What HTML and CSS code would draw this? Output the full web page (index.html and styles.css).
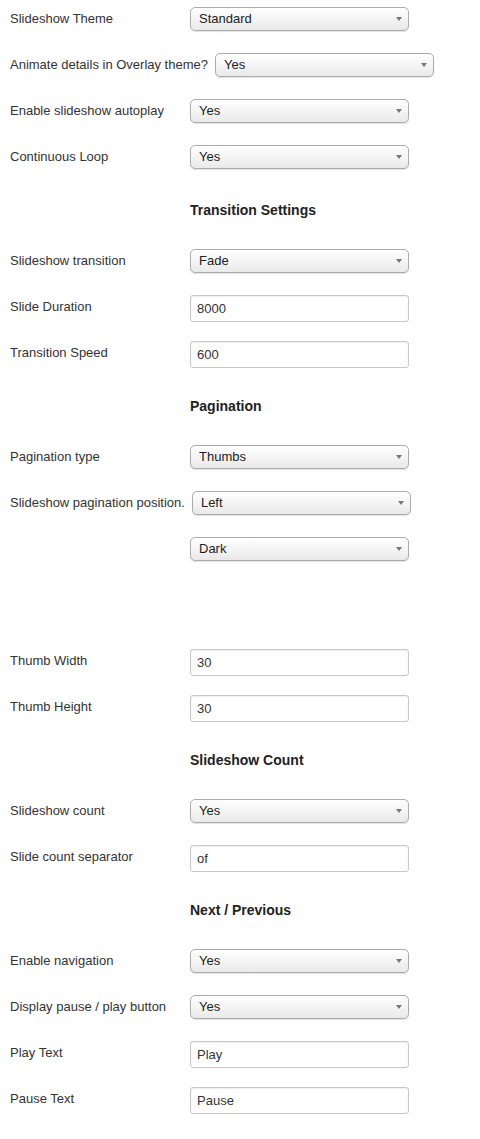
FILE: index.html
```html
<!DOCTYPE html>
<html lang="en">
<head>
    <meta charset="UTF-8">
    <meta name="viewport" content="width=device-width, initial-scale=1.0">
    <title>Slideshow Settings</title>
    <link rel="stylesheet" href="styles.css">
</head>
<body>
    <div class="settings">
        <div class="row">
            <label>Slideshow Theme</label>
            <span class="select"><select><option>Standard</option></select></span>
        </div>
        <div class="row">
            <label>Animate details in Overlay theme?</label>
            <span class="select"><select><option>Yes</option></select></span>
        </div>
        <div class="row">
            <label>Enable slideshow autoplay</label>
            <span class="select"><select><option>Yes</option></select></span>
        </div>
        <div class="row">
            <label>Continuous Loop</label>
            <span class="select"><select><option>Yes</option></select></span>
        </div>

        <div class="heading">Transition Settings</div>

        <div class="row">
            <label>Slideshow transition</label>
            <span class="select"><select><option>Fade</option></select></span>
        </div>
        <div class="row">
            <label>Slide Duration</label>
            <input type="text" value="8000">
        </div>
        <div class="row">
            <label>Transition Speed</label>
            <input type="text" value="600">
        </div>

        <div class="heading">Pagination</div>

        <div class="row">
            <label>Pagination type</label>
            <span class="select"><select><option>Thumbs</option></select></span>
        </div>
        <div class="row">
            <label>Slideshow pagination position.</label>
            <span class="select"><select><option>Left</option></select></span>
        </div>
        <div class="row">
            <label></label>
            <span class="select"><select><option>Dark</option></select></span>
        </div>
        <div class="spacer"></div>
        <div class="row">
            <label>Thumb Width</label>
            <input type="text" value="30">
        </div>
        <div class="row">
            <label>Thumb Height</label>
            <input type="text" value="30">
        </div>

        <div class="heading">Slideshow Count</div>

        <div class="row">
            <label>Slideshow count</label>
            <span class="select"><select><option>Yes</option></select></span>
        </div>
        <div class="row">
            <label>Slide count separator</label>
            <input type="text" value="of">
        </div>

        <div class="heading">Next / Previous</div>

        <div class="row">
            <label>Enable navigation</label>
            <span class="select"><select><option>Yes</option></select></span>
        </div>
        <div class="row">
            <label>Display pause / play button</label>
            <span class="select"><select><option>Yes</option></select></span>
        </div>
        <div class="row">
            <label>Play Text</label>
            <input type="text" value="Play">
        </div>
        <div class="row">
            <label>Pause Text</label>
            <input type="text" value="Pause">
        </div>
    </div>
</body>
</html>
```

FILE: styles.css
```css
body {
    margin: 0;
    padding: 0;
    background-color: #fff;
    font-family: "Liberation Sans", Arial, sans-serif;
    font-size: 13px;
    color: #333;
}
.settings {
    padding: 0 10px;
}
.row {
    display: flex;
    align-items: flex-start;
    height: 46px;
    padding-top: 7px;
    box-sizing: border-box;
}
.row label {
    min-width: 173px;
    padding-right: 7px;
    line-height: 24px;
    white-space: nowrap;
}
.heading {
    height: 58px;
    box-sizing: border-box;
    padding: 17px 0 0 180px;
    font-size: 14px;
    font-weight: bold;
    color: #222;
    line-height: 18px;
}
.spacer {
    height: 66px;
}
.select {
    position: relative;
    display: block;
    width: 219px;
}
.select select {
    -webkit-appearance: none;
    appearance: none;
    display: block;
    width: 100%;
    height: 24px;
    margin: 0;
    padding: 0 20px 2px 8px;
    border: 1px solid #acacac;
    border-radius: 5px;
    background: linear-gradient(#ffffff, #f6f6f6 45%, #e9e9e9);
    box-shadow: 0 1px 1px rgba(0, 0, 0, 0.12);
    font-family: inherit;
    font-size: 13px;
    color: #222;
    outline: none;
}
.select::after {
    content: "";
    position: absolute;
    top: 10px;
    right: 7px;
    border-left: 3.5px solid transparent;
    border-right: 3.5px solid transparent;
    border-top: 4px solid #777;
    pointer-events: none;
}
.row input {
    display: block;
    width: 219px;
    height: 27px;
    margin: 0;
    padding: 0 6px;
    box-sizing: border-box;
    border: 1px solid #c8c8c8;
    border-radius: 3px;
    box-shadow: inset 0 1px 2px rgba(0, 0, 0, 0.07);
    font-family: inherit;
    font-size: 13px;
    color: #333;
    outline: none;
}
```
